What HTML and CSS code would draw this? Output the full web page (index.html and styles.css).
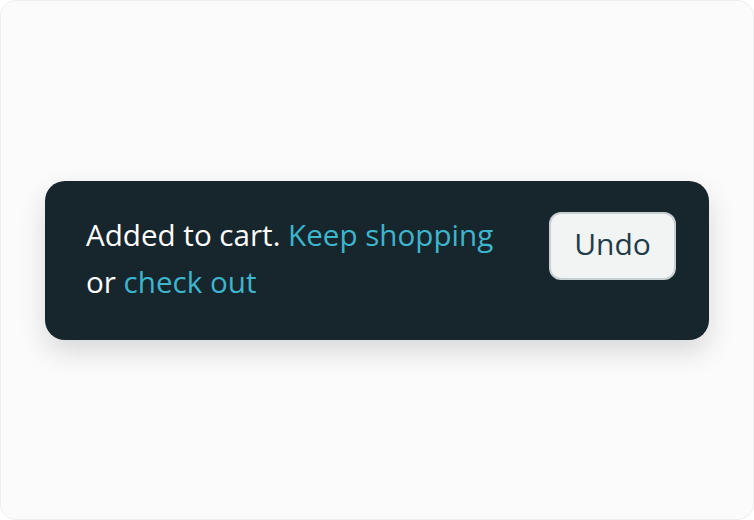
FILE: index.html
```html
<!DOCTYPE html>
<html lang="en">
<head>
<meta charset="utf-8">
<link rel="stylesheet" href="styles.css">
</head>
<body>
<div class="frame">
  <div class="toast" role="status">
    <p class="message">Added to cart. <a href="#" class="link">Keep shopping</a> or <a href="#" class="link">check out</a></p>
    <button class="undo" type="button">Undo</button>
  </div>
</div>
</body>
</html>
```
FILE: styles.css
```css
html, body {
  margin: 0;
  padding: 0;
  background: #ffffff;
}
.frame {
  box-sizing: border-box;
  width: 754px;
  height: 520px;
  border: 1px solid #eeeeee;
  border-radius: 16px;
  background: #fbfbfb;
  display: flex;
  align-items: center;
  justify-content: center;
}
.toast {
  box-sizing: border-box;
  width: 664px;
  height: 159px;
  background: #17252d;
  border-radius: 20px;
  box-shadow: 0 12px 28px rgba(0, 0, 0, 0.14);
  display: flex;
  align-items: flex-start;
  justify-content: space-between;
  padding: 30px 33px 0 41px;
  font-family: "Open Sans", "Noto Sans", sans-serif;
}
.message {
  margin: 0;
  width: 425px;
  color: #ffffff;
  font-size: 29.6px;
  line-height: 47px;
}
.link {
  color: #3db5cc;
  text-decoration: none;
}
.undo {
  margin-top: 1px;
  width: 127px;
  height: 68px;
  box-sizing: border-box;
  border: 2px solid #c8cfd2;
  border-radius: 12px;
  background: #f2f4f4;
  color: #1f3c48;
  font-family: "Open Sans", "Noto Sans", sans-serif;
  font-size: 30px;
  padding: 0 0 4px;
}
```
